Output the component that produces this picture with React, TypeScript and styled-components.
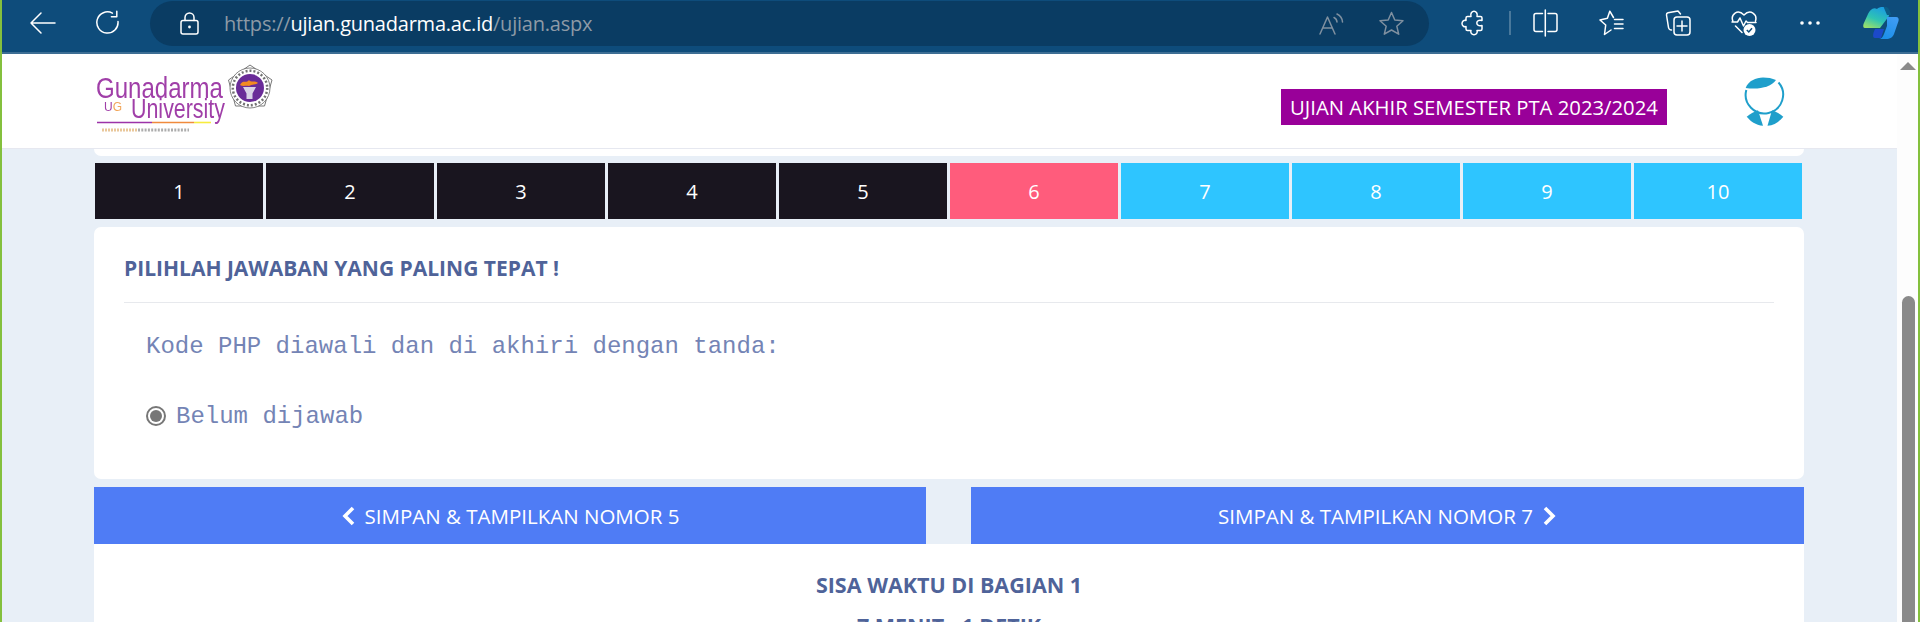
import React from "react";
import styled, { createGlobalStyle } from "styled-components";

const Global = createGlobalStyle`
  html, body { margin: 0; padding: 0; height: 622px; overflow: hidden; background: #fff; }
  * { box-sizing: border-box; }
`;

const Frame = styled.div`
  width: 1920px; height: 622px; display: flex; flex-direction: column; overflow: hidden;
  border-left: 2px solid #84c03d; border-right: 2px solid #84c03d;
  font-family: "Open Sans", "Liberation Sans", sans-serif;
`;
const BrowserBar = styled.div`
  flex: none; height: 54px; background: #0e4c7b; border-bottom: 2px solid #3d6e94;
  display: flex; align-items: flex-start; padding-left: 7px;
`;
const NavSlot = styled.div<{ $w?: number }>`
  flex: none; width: ${p => p.$w ?? 66}px; height: 46px; display: flex; align-items: center; justify-content: center;
`;
const AddressBar = styled.div`
  flex: none; width: 1279px; height: 45px; margin: 1px 11px 0 9px; border-radius: 23px; background: #0a3c63;
  display: flex; align-items: center; padding: 0 25px 0 30px;
`;
const Url = styled.div`
  margin-left: 25px; font-size: 20px; letter-spacing: -0.22px; color: #8d9aa6; white-space: nowrap;
  b { font-weight: 400; color: #fff; }
`;
const AddressIcons = styled.div`
  margin-left: auto; display: flex; align-items: center; gap: 35px;
`;
const Separator = styled.div`
  flex: none; width: 1.5px; height: 24px; margin: 11px 2px 0 3px; background: #49789b;
`;
const CopilotSlot = styled.div`
  flex: none; width: 36px; height: 46px; margin-left: 20px; display: flex; align-items: center;
`;
const Viewport = styled.div`
  flex: 1; min-height: 0; display: flex;
`;
const Page = styled.div`
  flex: 1; min-width: 0; background: #e8eff7; overflow: hidden;
`;
const Header = styled.header`
  height: 95px; background: #fff; border-bottom: 1px solid #e6e8f0;
  display: flex; align-items: flex-start; padding: 0 107px 0 93px;
`;
const Logo = styled.svg`
  flex: none; margin-top: 6px; filter: blur(0.35px);
`;
const Banner = styled.div`
  flex: none; margin: 35px 0 0 auto; height: 36px; width: 386px; background: #990099; color: #fff;
  font-size: 20.3px; display: flex; align-items: center; justify-content: center; white-space: nowrap;
`;
const Avatar = styled.svg`
  flex: none; margin: 16px 0 0 73px;
`;
const Content = styled.div`
  padding: 0 93px 0 92px; display: flex; flex-direction: column;
`;
const Sliver = styled.div`
  height: 7px; background: #fff; border-radius: 0 0 7px 7px;
`;
const Tiles = styled.div`
  margin: 7px 0 0 1px; display: flex; gap: 3px;
`;
const Tile = styled.div<{ $state: "done" | "current" | "todo" }>`
  flex: none; width: 168px; height: 56px; color: #fff; font-size: 20px; display: flex; align-items: center; justify-content: center;
  background: ${p => (p.$state === "done" ? "#19151f" : p.$state === "current" ? "#ff5c7c" : "#2ec5ff")};
`;
const Card = styled.section`
  margin-top: 8px; height: 252px; background: #fff; border-radius: 7px; padding: 0 30px;
`;
const Heading = styled.h2`
  margin: 0; height: 76px; padding-top: 6px; display: flex; align-items: center; border-bottom: 1px solid #e7e9ed;
  color: #4f6399; font-size: 21px; font-weight: 700; white-space: nowrap;
`;
const Question = styled.div`
  margin: 28px 0 0 22px; height: 32px; line-height: 32px; color: #7484b5;
  font-family: "Liberation Mono", monospace; font-size: 24px; white-space: pre;
`;
const Answer = styled.label`
  margin: 37px 0 0 22px; height: 32px; display: flex; align-items: center; gap: 10px; color: #7484b5;
  font-family: "Liberation Mono", monospace; font-size: 24px;
`;
const Radio = styled.span`
  flex: none; width: 20px; height: 20px; border-radius: 50%; border: 2px solid #777; background: #fff;
  display: flex; align-items: center; justify-content: center;
  &::after { content: ""; width: 12px; height: 12px; border-radius: 50%; background: #777; }
`;
const NavRow = styled.div`
  margin-top: 8px; display: flex; justify-content: space-between;
`;
const NavButton = styled.div<{ $w: number }>`
  width: ${p => p.$w}px; height: 57px; background: #4f7cf5; color: #fff; font-size: 20.5px; white-space: nowrap;
  display: flex; align-items: center; justify-content: center; gap: 9px;
`;
const TimerCard = styled.section`
  background: #fff; height: 200px; padding-top: 27px; text-align: center; color: #4f6399; font-weight: 700; font-size: 21.5px;
`;
const TimerLine = styled.div`
  height: 41px; line-height: 28px;
`;
const Scrollbar = styled.div`
  flex: none; width: 21px; background: #fdfdfd; display: flex; flex-direction: column; align-items: flex-start; padding-left: 5px;
`;
const ScrollArrow = styled.div`
  flex: none; margin: 8px 0 0 -2px; width: 0; height: 0;
  border-left: 8px solid transparent; border-right: 8px solid transparent; border-bottom: 8px solid #8a8a8a;
`;
const ScrollThumb = styled.div`
  flex: 1; width: 13px; margin-top: 226px; background: #8a8a8a; border-radius: 7px 7px 0 0;
`;

const Stroke = { fill: "none", stroke: "#fff", strokeWidth: 1.5, strokeLinecap: "round", strokeLinejoin: "round" } as const;
const GrayStroke = { ...Stroke, stroke: "#7f90a0" };

const Back = () => (
  <svg width="27" height="24" viewBox="0 0 27 24"><path {...Stroke} d="M12 2 2 12l10 10M2 12h24" /></svg>
);
const Refresh = () => (
  <svg width="26" height="26" viewBox="0 0 26 26"><path {...Stroke} d="M23 11.5a10.6 10.6 0 1 1-5.6-8.4M21.8 1.3v5.4h-5.4" /></svg>
);
const Lock = () => (
  <svg width="19" height="23" viewBox="0 0 19 23">
    <path {...Stroke} d="M5 8.5V5.5a4.5 4.5 0 0 1 9 0v3" />
    <rect {...Stroke} x="1" y="8.5" width="17" height="13.5" rx="2" />
    <circle cx="9.5" cy="15" r="1.4" fill="#fff" />
  </svg>
);
const ReadAloud = () => (
  <svg width="25" height="24" viewBox="0 0 25 24">
    <path {...GrayStroke} d="M1 22 8.5 5 16 22M3.8 16h9.4M15 5.5a5.5 5.5 0 0 1 3 4.5M18 2a9.5 9.5 0 0 1 5.500 8" />
  </svg>
);
const Star = () => (
  <svg width="25" height="25" viewBox="0 0 25 25">
    <path {...GrayStroke} d="M12.500 1.500 15.800 9l8.200.8-6.200 5.400 1.900 8L12.500 19l-7.200 4.200 1.900-8L1 9.800 9.200 9z" />
  </svg>
);
const Puzzle = () => (
  <svg width="24" height="26" viewBox="0 0 24 26">
    <path {...Stroke} d="M6.500 6.500H10C9 3.500 11 1.200 13 1.200S17 3.500 16 6.500H19.500A1.500 1.500 0 0 1 21 8V10.500C18 9.500 15.800 10.800 15.800 13S18 16.500 21 15.500V19A1.500 1.500 0 0 1 19.500 20.500H16C17 23 15 24.800 13 24.800S9 23 10 20.500H6.500A1.500 1.500 0 0 1 5 19V16.500C3 17.500 1 15.500 1 13.500S3 9.500 5 10.500V8A1.500 1.500 0 0 1 6.500 6.500Z" />
  </svg>
);
const Split = () => (
  <svg width="25" height="28" viewBox="0 0 25 28">
    <path {...Stroke} d="M9.500 4.500H3A2 2 0 0 0 1 6.500V20.500A2 2 0 0 0 3 22.500H9.500M15 4.500H22A2 2 0 0 1 24 6.500V20.500A2 2 0 0 1 22 22.500H15M12.300 1V27" />
  </svg>
);
const Favorites = () => (
  <svg width="25" height="26" viewBox="0 0 25 26">
    <path {...Stroke} d="M14.500 7.500 10.800 1.200 8.400 8.300 1 10l5.700 5-1.200 9.500 6.500-4.500M15.500 9.500H24M15.500 14H24M15.500 18.500H24" />
  </svg>
);
const Collections = () => (
  <svg width="26" height="28" viewBox="0 0 26 28">
    <path {...Stroke} d="M15.500 5 13 2 3 3.800A2 2 0 0 0 1.500 6l2 12.500a3 3 0 0 0 3 2.500" />
    <rect {...Stroke} x="9" y="8" width="16" height="18" rx="3" />
    <path {...Stroke} d="M17 12v10M12 17h10" />
  </svg>
);
const Health = () => (
  <svg width="26" height="28" viewBox="0 0 26 28">
    <path {...Stroke} d="M1.800 12C-.5 5.500 6.500-.5 13 6c6.500-6.500 13.500-.5 11.500 6M1 13h5.500l2.500-4 3.500 8 2.500-5 1.500 1.500H25M4.500 17l6.500 6.500" />
    <circle cx="18.500" cy="21" r="6" fill="#fff" />
    <path d="m15.800 21 2 2 3.200-3.800" fill="none" stroke="#0e4c7b" strokeWidth="1.500" />
  </svg>
);
const Dots = () => (
  <svg width="22" height="6" viewBox="0 0 22 6">
    <circle cx="3" cy="3" r="1.800" fill="#fff" /><circle cx="11" cy="3" r="1.800" fill="#fff" /><circle cx="19" cy="3" r="1.800" fill="#fff" />
  </svg>
);
const Copilot = () => (
  <svg width="36" height="34" viewBox="0 0 36 34">
    <defs>
      <linearGradient id="cpA" x1="0.7" y1="0" x2="0.2" y2="1">
        <stop offset="0" stopColor="#1b9de2" /><stop offset="0.55" stopColor="#2fc4b2" /><stop offset="1" stopColor="#9be06a" />
      </linearGradient>
      <linearGradient id="cpB" x1="0.7" y1="0" x2="0.2" y2="1">
        <stop offset="0" stopColor="#3f9cf5" /><stop offset="1" stopColor="#1a8fe8" />
      </linearGradient>
    </defs>
    <path d="M14 3C17 0 24 1 24.500 3L26 10 17 22H2C0 22 0 20 .5 18L5 8C7 4 10 1 14 3Z" fill="url(#cpA)" />
    <path d="M21 1h2c2 0 4 3 5 8l-4 0-3-7Z" fill="#0c5c86" />
    <path d="M12 23h9l-3 9H12C9 32 10 27 12 23Z" fill="#1c49c9" />
    <path d="M24 11h9c2.500 0 3 2 2.500 4L31 28c-1 3-4 5-8 5H16c2 0 4-2 5-5l3-8Z" fill="url(#cpB)" />
  </svg>
);

const LogoMark = () => (
  <Logo width="182" height="80" viewBox="95 60 182 80">
    <text x="96" y="98" fontFamily="Liberation Sans, sans-serif" fontSize="29" fill="#a03fa8" textLength="127" lengthAdjust="spacingAndGlyphs">Gunadarma</text>
    <text x="104" y="111" fontFamily="Liberation Sans, sans-serif" fontSize="13" fill="#a03fa8" textLength="18" lengthAdjust="spacingAndGlyphs">U<tspan fill="#f2a65a">G</tspan></text>
    <text x="131" y="118" fontFamily="Liberation Sans, sans-serif" fontSize="27" fill="#a03fa8" textLength="94" lengthAdjust="spacingAndGlyphs">University</text>
    <path d="M97 122.500h55" stroke="#9c33a8" strokeWidth="1.600" />
    <path d="M152 122.500h42" stroke="#f08a3c" strokeWidth="1.600" />
    <path d="M194 122.500h17" stroke="#f7ec3e" strokeWidth="1.600" />
    <path d="M102 130h36" stroke="#e0b070" strokeWidth="3" strokeDasharray="2 1" opacity="0.7" />
    <path d="M138 130h51" stroke="#777" strokeWidth="3" strokeDasharray="2 1.300" opacity="0.6" />
    <path d="M250 65 272 80 264.500 106 235.500 106 228.500 80Z" fill="#fff" stroke="#777" strokeWidth="1" strokeLinejoin="round" />
    <circle cx="250" cy="88" r="20" fill="#fff" stroke="#666" strokeWidth="0.8" />
    <circle cx="250" cy="88" r="17.200" fill="none" stroke="#444" strokeWidth="2.500" strokeDasharray="2 2" opacity="0.75" />
    <circle cx="250" cy="88" r="14" fill="#6a2c98" />
    <path d="M240 85c3-6 6-1 9-5 1 3 7 0 9 3-2 2-6 1-9 3-3-1-6 1-9-1Z" fill="#f28a22" />
    <path d="M243 87h13l-3.500 6.500v5.500h-6v-5.500Z" fill="#d8d2e6" />
  </Logo>
);

const Person = () => (
  <Avatar width="50" height="60" viewBox="0 0 50 60">
    <path d="M38.500 12.500A18.700 18.700 0 1 1 6.300 20" fill="none" stroke="#1f9fcb" strokeWidth="2" />
    <path d="M5.700 18C8 11 16 7.500 23 7.500c5 0 9 .8 13 2.500C31 17 19 20 5.700 18Z" fill="#1f9fcb" />
    <path d="M18 40.200 23 55.700C15.500 55.300 10.500 51 6.700 46.700 10 44 14 41.500 18 40.200Z" fill="#1f9fcb" />
    <path d="M32 40.200 27.500 55.700C35 55.300 39.500 51 43.300 46.700 40 44 36 41.500 32 40.200Z" fill="#1f9fcb" />
  </Avatar>
);

const ChevronLeft = () => (
  <svg width="15" height="20" viewBox="0 0 15 20"><path d="M12 2 4 10l8 8" fill="none" stroke="#fff" strokeWidth="3.600" /></svg>
);
const ChevronRight = () => (
  <svg width="15" height="20" viewBox="0 0 15 20"><path d="M3 2l8 8-8 8" fill="none" stroke="#fff" strokeWidth="3.600" /></svg>
);

const tiles = [1, 2, 3, 4, 5, 6, 7, 8, 9, 10];

export default function App() {
  return (
    <Frame>
      <Global />
      <BrowserBar>
        <NavSlot><Back /></NavSlot>
        <NavSlot><Refresh /></NavSlot>
        <AddressBar>
          <Lock />
          <Url>https://<b>ujian.gunadarma.ac.id</b>/ujian.aspx</Url>
          <AddressIcons><ReadAloud /><Star /></AddressIcons>
        </AddressBar>
        <NavSlot><Puzzle /></NavSlot>
        <Separator />
        <NavSlot><Split /></NavSlot>
        <NavSlot><Favorites /></NavSlot>
        <NavSlot><Collections /></NavSlot>
        <NavSlot><Health /></NavSlot>
        <NavSlot><Dots /></NavSlot>
        <CopilotSlot><Copilot /></CopilotSlot>
      </BrowserBar>
      <Viewport>
        <Page>
          <Header>
            <LogoMark />
            <Banner>UJIAN AKHIR SEMESTER PTA 2023/2024</Banner>
            <Person />
          </Header>
          <Content>
            <Sliver />
            <Tiles>
              {tiles.map(n => (
                <Tile key={n} $state={n < 6 ? "done" : n === 6 ? "current" : "todo"}>{n}</Tile>
              ))}
            </Tiles>
            <Card>
              <Heading>PILIHLAH JAWABAN YANG PALING TEPAT !</Heading>
              <Question>Kode PHP diawali dan di akhiri dengan tanda:</Question>
              <Answer><Radio />Belum dijawab</Answer>
            </Card>
            <NavRow>
              <NavButton $w={832}><ChevronLeft />SIMPAN &amp; TAMPILKAN NOMOR 5</NavButton>
              <NavButton $w={833}>SIMPAN &amp; TAMPILKAN NOMOR 7<ChevronRight /></NavButton>
            </NavRow>
            <TimerCard>
              <TimerLine>SISA WAKTU DI BAGIAN 1</TimerLine>
              <TimerLine>7 MENIT : 1 DETIK</TimerLine>
            </TimerCard>
          </Content>
        </Page>
        <Scrollbar>
          <ScrollArrow />
          <ScrollThumb />
        </Scrollbar>
      </Viewport>
    </Frame>
  );
}
